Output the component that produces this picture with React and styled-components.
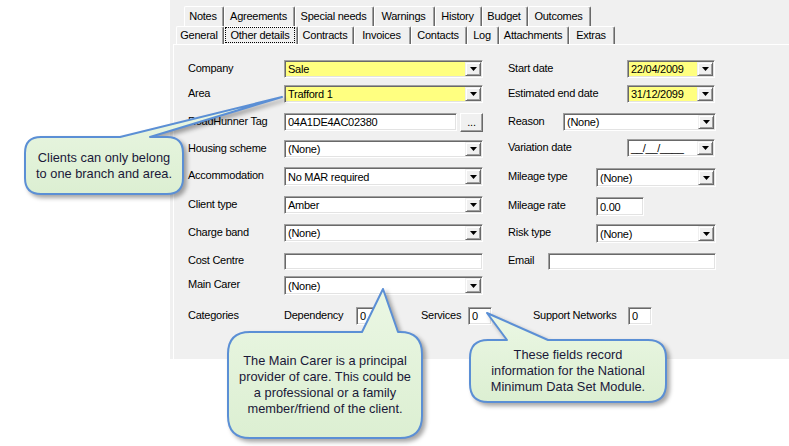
import React from "react";
import styled, { createGlobalStyle } from "styled-components";

const Global = createGlobalStyle`
  html, body { margin: 0; padding: 0; background: #ffffff; }
  body { width: 789px; height: 446px; overflow: hidden; font-family: "Liberation Sans", Arial, sans-serif; }
`;

const Stage = styled.div`
  position: relative;
  width: 789px;
  height: 446px;
  background: #ffffff;
`;

const Window = styled.div`
  box-sizing: border-box;
  margin-left: 170px;
  width: 619px;
  height: 359px;
  background: #f0f0f0;
  padding: 6px 0 0 3px;
  display: flex;
  flex-direction: column;
  font-family: "Liberation Sans", Arial, sans-serif;
  font-size: 11px;
  letter-spacing: -0.25px;
  color: #000;
`;

const TabRow = styled.div`
  display: flex;
  height: ${(p) => p.$h}px;
  padding-left: ${(p) => p.$indent}px;
`;

const Tab = styled.div`
  box-sizing: border-box;
  width: ${(p) => p.$w}px;
  height: 100%;
  display: flex;
  align-items: center;
  justify-content: center;
  background: #f0f0f0;
  border-top: 1px solid #ffffff;
  border-left: 1px solid #ffffff;
  border-right: 1px solid #696969;
  box-shadow: inset -1px 0 0 #a0a0a0;
  border-radius: 2px 2px 0 0;
  padding: 0 2px 1px 0;
  white-space: nowrap;
`;

const FocusText = styled.span`
  box-sizing: border-box;
  display: flex;
  align-items: center;
  justify-content: center;
  width: 100%;
  height: 100%;
  outline: 1px dotted #000;
  outline-offset: -1px;
`;

const Page = styled.div`
  flex: 1;
  border-top: 1px solid #ffffff;
  border-left: 1px solid #ffffff;
  padding: 15px 0 0 14px;
`;

const Columns = styled.div`
  display: flex;
  gap: 25px;
  align-items: flex-start;
`;

const Column = styled.div`
  display: flex;
  flex-direction: column;
  width: ${(p) => p.$w}px;
`;

const Row = styled.div`
  display: flex;
  align-items: center;
  height: ${(p) => p.$h || 18}px;
  margin-top: ${(p) => p.$mt || 0}px;
`;

const Label = styled.div`
  width: ${(p) => p.$w}px;
  flex: none;
  padding-bottom: 3px;
  white-space: nowrap;
`;

const Field = styled.div`
  box-sizing: border-box;
  width: ${(p) => p.$w}px;
  height: 100%;
  flex: none;
  border: 1px solid;
  border-color: #a0a0a0 #ffffff #ffffff #a0a0a0;
  box-shadow: inset 1px 1px 0 #696969, inset -1px -1px 0 #e3e3e3;
  background: ${(p) => (p.$yellow ? "#ffff80" : "#ffffff")};
  display: flex;
  align-items: center;
  padding: 1px 1px 1px 1px;
`;

const FieldText = styled.span`
  flex: 1;
  padding-left: 2px;
  white-space: nowrap;
  overflow: hidden;
`;

const DropButton = styled.div`
  box-sizing: border-box;
  width: 16px;
  height: 100%;
  flex: none;
  background: #f0f0f0;
  border: 1px solid;
  border-color: #f0f0f0 #696969 #696969 #f0f0f0;
  box-shadow: inset 1px 1px 0 #ffffff, inset -1px -1px 0 #a0a0a0;
  display: flex;
  align-items: center;
  justify-content: center;
`;

const EllipsisButton = styled.div`
  box-sizing: border-box;
  width: 23px;
  height: 19px;
  margin-left: 3px;
  flex: none;
  background: #f0f0f0;
  border: 1px solid;
  border-color: #ffffff #696969 #696969 #ffffff;
  box-shadow: inset -1px -1px 0 #a0a0a0;
  display: flex;
  align-items: flex-end;
  justify-content: center;
  padding-bottom: 3px;
  line-height: 1;
`;

const CatRow = styled.div`
  display: flex;
  align-items: center;
  height: 18px;
  margin-top: 12px;
`;

const SmallBox = styled(Field)`
  margin-right: ${(p) => p.$mr || 0}px;
`;

const Bubble = styled.svg`
  position: absolute;
  left: 0;
  top: 0;
  width: 789px;
  height: 446px;
  pointer-events: none;
  overflow: visible;
  filter: drop-shadow(3px 3px 2px rgba(0, 0, 0, 0.35));
`;

const BubbleText = styled.div`
  position: absolute;
  left: ${(p) => p.$x}px;
  top: ${(p) => p.$y}px;
  width: ${(p) => p.$w}px;
  height: ${(p) => p.$h}px;
  display: flex;
  align-items: center;
  justify-content: center;
  text-align: center;
  font-family: "Liberation Sans", Arial, sans-serif;
  font-size: 12.8px;
  line-height: 16px;
  color: #1a1838;
  padding-top: ${(p) => p.$pt || 0}px;
  box-sizing: border-box;
`;

const Arrow = () => (
  <svg width="7" height="4" viewBox="0 0 7 4">
    <polygon points="0,0 7,0 3.5,4" fill="#000" />
  </svg>
);

const Combo = ({ w, value, yellow }) => (
  <Field $w={w} $yellow={yellow}>
    <FieldText>{value}</FieldText>
    <DropButton>
      <Arrow />
    </DropButton>
  </Field>
);

const Input = ({ w, value }) => (
  <Field $w={w}>
    <FieldText>{value}</FieldText>
  </Field>
);

function bubblePath(x, y, w, h, r, b1, b2, tx, ty) {
  return [
    `M ${x + r} ${y}`,
    `L ${b1} ${y}`,
    `L ${tx} ${ty}`,
    `L ${b2} ${y}`,
    `L ${x + w - r} ${y}`,
    `Q ${x + w} ${y} ${x + w} ${y + r}`,
    `L ${x + w} ${y + h - r}`,
    `Q ${x + w} ${y + h} ${x + w - r} ${y + h}`,
    `L ${x + r} ${y + h}`,
    `Q ${x} ${y + h} ${x} ${y + h - r}`,
    `L ${x} ${y + r}`,
    `Q ${x} ${y} ${x + r} ${y}`,
    "Z",
  ].join(" ");
}

const Callout = ({ id, x, y, w, h, r, b1, b2, tx, ty, children }) => (
  <>
    <Bubble viewBox="0 0 789 446">
      <defs>
        <linearGradient id={id} x1="0" y1="0" x2="0" y2="1">
          <stop offset="0" stopColor="#ebf7e4" />
          <stop offset="1" stopColor="#dcefd2" />
        </linearGradient>
      </defs>
      <path
        d={bubblePath(x, y, w, h, r, b1, b2, tx, ty)}
        fill={`url(#${id})`}
        stroke="#5b8fd5"
        strokeWidth="2"
        strokeLinejoin="round"
      />
    </Bubble>
    <BubbleText $x={x} $y={y} $w={w} $h={h}>
      {children}
    </BubbleText>
  </>
);

const row1 = [
  ["Notes", 40],
  ["Agreements", 71],
  ["Special needs", 79],
  ["Warnings", 61],
  ["History", 47],
  ["Budget", 46],
  ["Outcomes", 63],
];
const row2 = [
  ["General", 48],
  ["Other details", 74],
  ["Contracts", 56],
  ["Invoices", 57],
  ["Contacts", 56],
  ["Log", 32],
  ["Attachments", 70],
  ["Extras", 46],
];

export default function App() {
  return (
    <Stage>
      <Global />
      <Window>
        <TabRow $h={20} $indent={11}>
          {row1.map(([t, w]) => (
            <Tab key={t} $w={w}>
              {t}
            </Tab>
          ))}
        </TabRow>
        <TabRow $h={18} $indent={3}>
          {row2.map(([t, w]) => (
            <Tab key={t} $w={w}>
              {t === "Other details" ? <FocusText>{t}</FocusText> : t}
            </Tab>
          ))}
        </TabRow>
        <Page>
          <Columns>
            <Column $w={295}>
              <Row>
                <Label $w={96}>Company</Label>
                <Combo w={199} value="Sale" yellow />
              </Row>
              <Row $mt={7}>
                <Label $w={96}>Area</Label>
                <Combo w={199} value="Trafford 1" yellow />
              </Row>
              <Row $mt={10}>
                <Label $w={96}>RoadHunner Tag</Label>
                <Input w={173} value="04A1DE4AC02380" />
                <EllipsisButton>...</EllipsisButton>
              </Row>
              <Row $mt={9}>
                <Label $w={96}>Housing scheme</Label>
                <Combo w={199} value="(None)" />
              </Row>
              <Row $mt={9} $h={19}>
                <Label $w={96}>Accommodation</Label>
                <Combo w={199} value="No MAR required" />
              </Row>
              <Row $mt={10}>
                <Label $w={96}>Client type</Label>
                <Combo w={199} value="Amber" />
              </Row>
              <Row $mt={10}>
                <Label $w={96}>Charge band</Label>
                <Combo w={199} value="(None)" />
              </Row>
              <Row $mt={11} $h={17}>
                <Label $w={96}>Cost Centre</Label>
                <Input w={199} value="" />
              </Row>
              <Row $mt={6} $h={19}>
                <Label $w={96}>Main Carer</Label>
                <Combo w={199} value="(None)" />
              </Row>
            </Column>
            <Column $w={208}>
              <Row>
                <Label $w={119}>Start date</Label>
                <Combo w={88} value="22/04/2009" yellow />
              </Row>
              <Row $mt={7}>
                <Label $w={119}>Estimated end date</Label>
                <Combo w={88} value="31/12/2099" yellow />
              </Row>
              <Row $mt={10}>
                <Label $w={55}>Reason</Label>
                <Combo w={153} value="(None)" />
              </Row>
              <Row $mt={8}>
                <Label $w={119}>Variation date</Label>
                <Combo w={88} value="__/__/____" />
              </Row>
              <Row $mt={11} $h={19}>
                <Label $w={88}>Mileage type</Label>
                <Combo w={120} value="(None)" />
              </Row>
              <Row $mt={10} $h={19}>
                <Label $w={88}>Mileage rate</Label>
                <Input w={48} value="0.00" />
              </Row>
              <Row $mt={8} $h={19}>
                <Label $w={88}>Risk type</Label>
                <Combo w={120} value="(None)" />
              </Row>
              <Row $mt={10} $h={17}>
                <Label $w={40}>Email</Label>
                <Input w={168} value="" />
              </Row>
            </Column>
          </Columns>
          <CatRow>
            <Label $w={96}>Categories</Label>
            <Label $w={72}>Dependency</Label>
            <SmallBox $w={24} $mr={41}>
              <FieldText>0</FieldText>
            </SmallBox>
            <Label $w={47}>Services</Label>
            <SmallBox $w={24} $mr={41}>
              <FieldText>0</FieldText>
            </SmallBox>
            <Label $w={95}>Support Networks</Label>
            <SmallBox $w={24}>
              <FieldText>0</FieldText>
            </SmallBox>
          </CatRow>
        </Page>
      </Window>

      <Callout id="g1" x={25} y={137} w={158} h={57} r={16} b1={120} b2={150} tx={282} ty={97}>
        Clients can only belong
        <br />
        to one branch and area.
      </Callout>
      <Callout id="g2" x={228} y={332} w={194} h={106} r={22} b1={362} b2={398} tx={383} ty={289}>
        The Main Carer is a principal
        <br />
        provider of care. This could be
        <br />a professional or a family
        <br />
        member/friend of the client.
      </Callout>
      <Callout id="g3" x={470} y={340} w={196} h={62} r={18} b1={507} b2={548} tx={487} ty={313}>
        These fields record
        <br />
        information for the National
        <br />
        Minimum Data Set Module.
      </Callout>
    </Stage>
  );
}
